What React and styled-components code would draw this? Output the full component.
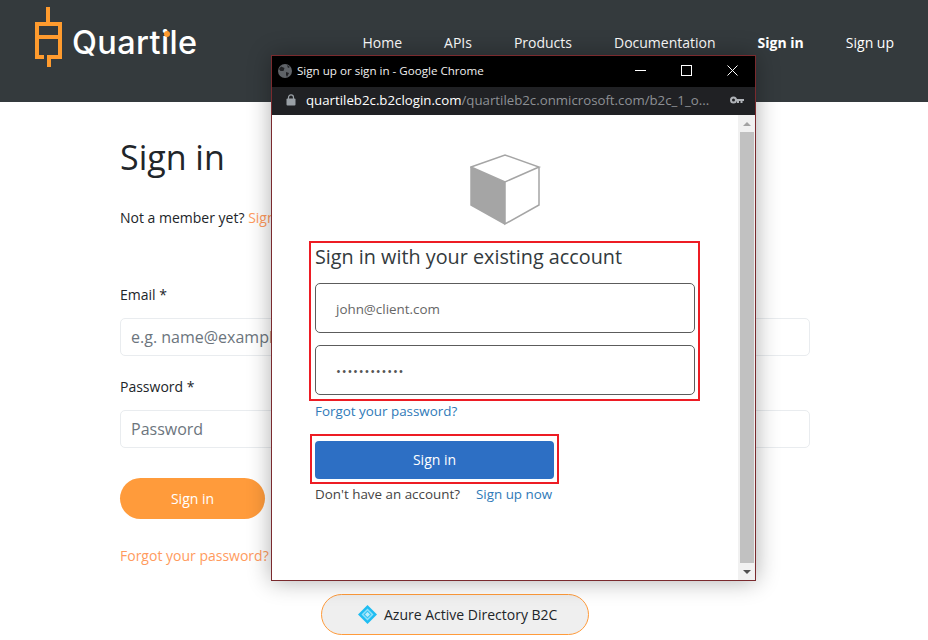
import React from "react";
import styled, { createGlobalStyle } from "styled-components";

const Global = createGlobalStyle`
  html, body { margin: 0; padding: 0; background: #fff; }
  body { font-family: "Open Sans", "Noto Sans", sans-serif; width: 928px; height: 640px; overflow: hidden; }
  * { box-sizing: border-box; }
`;

const Page = styled.div`
  position: relative;
  width: 928px;
  height: 640px;
  overflow: hidden;
`;

const Header = styled.header`
  height: 102px;
  background: #343a3d;
  display: flex;
  justify-content: space-between;
  align-items: flex-start;
  padding: 7px 34px 0 35px;
`;

const Brand = styled.div`
  display: flex;
  align-items: flex-start;
`;

const BrandName = styled.span`
  position: relative;
  font-family: "Inter", sans-serif;
  font-weight: 500;
  font-size: 32.4px;
  line-height: 40px;
  color: #fff;
  margin: 16px 0 0 10px;
  letter-spacing: 0.4px;
`;

const BrandDot = styled.i`
  position: absolute;
  left: 92px;
  top: 8px;
  width: 6px;
  height: 6px;
  border-radius: 50%;
  background: #ff9b2e;
`;

const Nav = styled.nav`
  display: flex;
  gap: 42px;
  margin-top: 26px;
`;

const NavLink = styled.a`
  font-size: 14px;
  line-height: 20px;
  color: #fff;
  font-weight: ${(p) => (p.$active ? 700 : 400)};
`;

const Main = styled.main`
  width: 690px;
  margin-left: 120px;
  padding-top: 32px;
  display: flex;
  flex-direction: column;
`;

const Title = styled.h1`
  margin: 0;
  font-size: 34px;
  line-height: 46px;
  font-weight: 400;
  color: #212529;
`;

const Intro = styled.p`
  margin: 28px 0 0;
  font-size: 14px;
  line-height: 20px;
  color: #212529;
`;

const Accent = styled.a`
  color: #ff9b5e;
`;

const Label = styled.label`
  font-size: 14px;
  line-height: 20px;
  color: #212529;
  margin-top: ${(p) => p.$top}px;
`;

const TextField = styled.div`
  height: 38px;
  margin-top: 13px;
  padding-left: 10px;
  border: 1px solid #e9ecef;
  border-radius: 5px;
  font-size: 16px;
  line-height: 37px;
  color: #6c757d;
`;

const OrangeButton = styled.button`
  width: 145px;
  height: 41px;
  margin-top: 30px;
  border: 0;
  border-radius: 21px;
  background: #ff9b3b;
  color: #fff;
  font-family: inherit;
  font-size: 14px;
`;

const Forgot = styled(Accent)`
  font-size: 14px;
  line-height: 20px;
  margin-top: 27px;
`;

const AzureChip = styled.div`
  position: absolute;
  left: 321px;
  top: 594px;
  width: 268px;
  height: 41px;
  display: flex;
  align-items: center;
  gap: 7px;
  padding-left: 36px;
  border: 1px solid #ff9b3b;
  border-radius: 21px;
  background: #efefef;
  font-size: 14px;
  color: #212529;
`;

const Popup = styled.div`
  position: absolute;
  left: 271px;
  top: 55px;
  width: 485px;
  height: 526px;
  display: flex;
  flex-direction: column;
  border: 1px solid #7a2a2e;
  background: #fff;
  box-shadow: 0 0 22px rgba(0, 0, 0, 0.32);
`;

const TitleBar = styled.div`
  height: 31px;
  flex: none;
  background: #000;
  display: flex;
  align-items: center;
  padding: 0 0 2px 6px;
  color: #fff;
  font-size: 11.6px;
`;

const TitleText = styled.span`
  margin-left: 5px;
  flex: 1;
  color: #f0f0f0;
`;

const WindowControls = styled.div`
  display: flex;
  align-items: center;
  gap: 35px;
  margin-right: 17px;
`;

const AddressBar = styled.div`
  height: 28px;
  flex: none;
  background: #202124;
  display: flex;
  align-items: center;
  padding: 0 11px 2px 14px;
  font-size: 13.26px;
`;

const Url = styled.span`
  margin-left: 10px;
  flex: 1;
  color: #8d9094;
  white-space: nowrap;
`;

const UrlHost = styled.span`
  color: #fff;
`;

const PopupBody = styled.div`
  flex: 1;
  display: flex;
  min-height: 0;
`;

const Content = styled.div`
  flex: 1;
  display: flex;
  flex-direction: column;
  padding: 39px 0 0 37px;
`;

const CubeWrap = styled.div`
  width: 72px;
  height: 72px;
  margin-left: 161px;
`;

const RedBox = styled.div`
  border: 2px solid #ed1c24;
`;

const FormBox = styled(RedBox)`
  width: 391px;
  height: 160px;
  margin-top: 15px;
  padding: 0 4px;
  display: flex;
  flex-direction: column;
`;

const FormHeading = styled.h2`
  margin: 0;
  font-size: 19.8px;
  line-height: 28px;
  font-weight: 500;
  color: #333a3d;
`;

const PopupField = styled.div`
  width: 380px;
  height: 50px;
  margin-top: ${(p) => p.$top}px;
  padding-left: 20px;
  border: 1px solid #5c5c5c;
  border-radius: 5px;
  font-size: 13.4px;
  line-height: 50px;
  color: #666;
`;

const Dots = styled.span`
  font-size: 13px;
  letter-spacing: 0.8px;
  color: #555;
`;

const BlueLink = styled.a`
  color: #2f7ab8;
  font-size: 13.4px;
  line-height: 18px;
`;

const ForgotBlue = styled(BlueLink)`
  margin: 1px 0 0 6px;
`;

const ButtonBox = styled(RedBox)`
  width: 249px;
  height: 50px;
  margin: 14px 0 0 1px;
  padding: 5px 3px;
`;

const BlueButton = styled.button`
  display: block;
  width: 239px;
  height: 38px;
  padding: 0 0 2px;
  border: 0;
  border-radius: 4px;
  background: #2d6fc4;
  color: #fff;
  font-family: inherit;
  font-size: 14px;
`;

const SignUpRow = styled.div`
  display: flex;
  gap: 16px;
  margin: 1px 0 0 6px;
  font-size: 13.4px;
  line-height: 18px;
  color: #444;
`;

const Scrollbar = styled.div`
  width: 17px;
  flex: none;
  background: #f1f1f1;
  display: flex;
  flex-direction: column;
  align-items: center;
`;

const ArrowSlot = styled.div`
  height: 17px;
  flex: none;
  display: flex;
  align-items: center;
  justify-content: center;
`;

const Thumb = styled.div`
  width: 14px;
  flex: 1;
  background: #c1c1c1;
`;

const UpArrow = styled.div`
  width: 0;
  height: 0;
  border-left: 4px solid transparent;
  border-right: 4px solid transparent;
  border-bottom: 4px solid #a3a3a3;
`;

const DownArrow = styled.div`
  width: 0;
  height: 0;
  border-left: 4px solid transparent;
  border-right: 4px solid transparent;
  border-top: 4px solid #505050;
`;

const Logo = () => (
  <svg width="27" height="60" viewBox="0 0 27 60" fill="none" stroke="#ff9b2e" strokeWidth="4">
    <path d="M13 0V16" />
    <path d="M2 52V17H25V50H14V60" />
    <path d="M0 50H9" />
    <path d="M2 30H25" />
  </svg>
);

const Globe = () => (
  <svg width="14" height="14" viewBox="0 0 14 14">
    <circle cx="7" cy="7" r="7" fill="#5f6368" />
    <path d="M3 2.500 6.500 4 5.500 7 2.500 7 1 5ZM8 8l3 1-2 4-1-2ZM9 1l3 2-2 1Z" fill="#202124" />
  </svg>
);

const Lock = () => (
  <svg width="10" height="12" viewBox="0 0 10 12">
    <path d="M2.500 5V3.400a2.500 2.500 0 0 1 5 0V5" fill="none" stroke="#9aa0a6" strokeWidth="1.200" />
    <rect x="0.500" y="4.500" width="9" height="7" rx="1" fill="#9aa0a6" />
  </svg>
);

const Key = () => (
  <svg width="14" height="8" viewBox="0 0 14 8">
    <circle cx="3.500" cy="4" r="2.500" fill="none" stroke="#b0b3b8" strokeWidth="2" />
    <path d="M6 3h8v2h-1.500v2h-2V5H9v2H7V5H6Z" fill="#b0b3b8" />
  </svg>
);

const Cube = () => (
  <svg width="72" height="72" viewBox="0 0 72 72">
    <path d="M1 13 35 28V70L1 51Z" fill="#a5a5a5" />
    <path d="M1 13 35 1 69 13 35 28Z M35 28V70L69 51V13" fill="#fff" stroke="#a5a5a5" strokeWidth="1.500" />
    <path d="M1 13V51L35 70" fill="none" stroke="#a5a5a5" strokeWidth="1.500" />
  </svg>
);

const AzureIcon = () => (
  <svg width="19" height="19" viewBox="0 0 19 19">
    <path d="M9.500 0 19 9.500 9.500 19 0 9.500Z" fill="#1fbdf2" />
    <path d="M9.500 3.500 15.500 9.500 9.500 15.500 3.500 9.500Z" fill="#8fe0fa" />
    <path d="M9.500 5.500 13.500 9.500 9.500 13.500 5.500 9.500Z" fill="#35c3f3" />
    <path d="M9.500 7 12 9.500 9.500 12 7 9.500Z" fill="#bdeefc" />
  </svg>
);

export default function App() {
  return (
    <Page>
      <Global />
      <Header>
        <Brand>
          <Logo />
          <BrandName>
            Quartile
            <BrandDot />
          </BrandName>
        </Brand>
        <Nav>
          <NavLink>Home</NavLink>
          <NavLink>APIs</NavLink>
          <NavLink>Products</NavLink>
          <NavLink>Documentation</NavLink>
          <NavLink $active>Sign in</NavLink>
          <NavLink>Sign up</NavLink>
        </Nav>
      </Header>
      <Main>
        <Title>Sign in</Title>
        <Intro>
          Not a member yet? <Accent>Sign up now</Accent>
        </Intro>
        <Label $top={57}>Email *</Label>
        <TextField>e.g. name@example.com</TextField>
        <Label $top={21}>Password *</Label>
        <TextField>Password</TextField>
        <OrangeButton>Sign in</OrangeButton>
        <Forgot>Forgot your password?</Forgot>
      </Main>
      <AzureChip>
        <AzureIcon />
        Azure Active Directory B2C
      </AzureChip>
      <Popup>
        <TitleBar>
          <Globe />
          <TitleText>Sign up or sign in - Google Chrome</TitleText>
          <WindowControls>
            <svg width="11" height="11" viewBox="0 0 11 11"><path d="M0 5.500H11" stroke="#fff" /></svg>
            <svg width="11" height="11" viewBox="0 0 11 11"><rect x="0.500" y="0.500" width="10" height="10" fill="none" stroke="#fff" /></svg>
            <svg width="11" height="11" viewBox="0 0 11 11"><path d="M0.500 0.500 10.500 10.500M10.500 0.500 0.500 10.500" stroke="#fff" /></svg>
          </WindowControls>
        </TitleBar>
        <AddressBar>
          <Lock />
          <Url>
            <UrlHost>quartileb2c.b2clogin.com</UrlHost>/quartileb2c.onmicrosoft.com/b2c_1_o...
          </Url>
          <Key />
        </AddressBar>
        <PopupBody>
          <Content>
            <CubeWrap><Cube /></CubeWrap>
            <FormBox>
              <FormHeading>Sign in with your existing account</FormHeading>
              <PopupField $top={12}>john@client.com</PopupField>
              <PopupField $top={12}><Dots>••••••••••••</Dots></PopupField>
            </FormBox>
            <ForgotBlue>Forgot your password?</ForgotBlue>
            <ButtonBox><BlueButton>Sign in</BlueButton></ButtonBox>
            <SignUpRow>
              Don't have an account?
              <BlueLink>Sign up now</BlueLink>
            </SignUpRow>
          </Content>
          <Scrollbar>
            <ArrowSlot><UpArrow /></ArrowSlot>
            <Thumb />
            <ArrowSlot><DownArrow /></ArrowSlot>
          </Scrollbar>
        </PopupBody>
      </Popup>
    </Page>
  );
}
